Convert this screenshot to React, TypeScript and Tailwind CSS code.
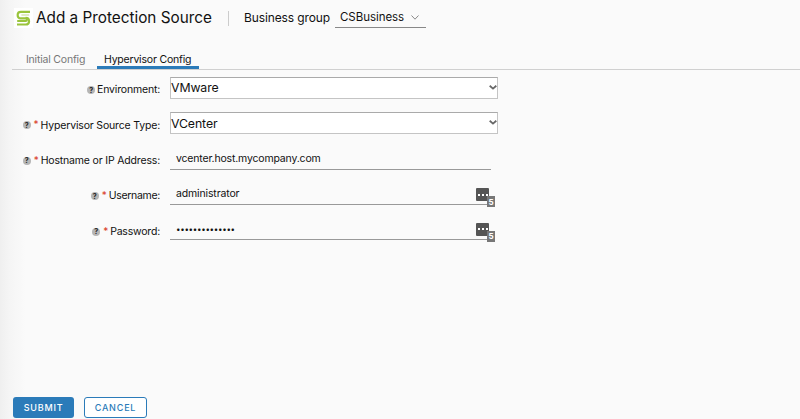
import type { ReactNode } from "react";

function Logo() {
  return (
    <div className="flex h-5 w-[19px] items-center justify-center bg-white">
      <svg width="15" height="16" viewBox="0 0 15 16" fill="none" stroke="#9ac43c" strokeWidth="2.2">
        <path d="M14 1.8H4.8C.6 1.8.6 8.4 4.8 8.4h5c1.4 0 1.4 2.6 0 2.6H1.2" />
        <path d="M13.2 5H5.4" strokeWidth="1.2" strokeOpacity=".5" />
        <path d="M9.6 7.8c4.6 0 4.6 6.7 0 6.7H1" />
      </svg>
    </div>
  );
}

function Help() {
  return (
    <span className="flex size-[8px] items-center justify-center rounded-full bg-[#b5b5b5] text-[7px] leading-none font-bold text-[#222]">
      ?
    </span>
  );
}

function Row({ label, required, spacing, children }: { label: string; required?: boolean; spacing: string; children: ReactNode }) {
  return (
    <div className="flex h-[35.4px] items-start">
      <div className="mt-[6px] flex h-4 w-[160px] shrink-0 items-center justify-end">
        <Help />
        {required && <span className="ml-[3px] h-4 w-[5px] text-[10px] leading-[15px] text-[#d8391f]">*</span>}
        <span className={`ml-[2px] text-[10.5px] whitespace-nowrap ${spacing}`}>{label}</span>
      </div>
      <div className="ml-[10px]">{children}</div>
    </div>
  );
}

function Select({ value }: { value: string }) {
  return (
    <div className="mt-px flex h-[22px] w-[328px] items-center justify-between border border-[#c4c4c4] border-t-[#aaa] bg-white text-[12.3px]">
      <span className="mt-px tracking-[-0.1px]">{value}</span>
      <svg className="mb-px" width="8" height="5" viewBox="0 0 8 5" fill="none" stroke="#666" strokeWidth="1.8">
        <path d="M.7.8 4 3.6 7.3.8" />
      </svg>
    </div>
  );
}

function Field({ value, manager, spacing }: { value: string; manager?: boolean; spacing: string }) {
  return (
    <div className="relative mt-px h-[23px] w-[321px] border-b border-[#999] pl-[6px] text-[10.5px] leading-[24px]">
      <span className={`block ${spacing}`}>{value}</span>
      {manager && (
        <div className="absolute top-[6px] right-[2px] flex h-[13px] w-[13px] items-center justify-center gap-[2px] rounded-[1px] bg-[#555]">
          <i className="size-[2px] bg-white" />
          <i className="size-[2px] bg-white" />
          <i className="size-[2px] bg-white" />
          <b className="absolute top-[8px] left-[11px] flex h-[11px] w-[8px] items-center justify-center bg-[#777] text-[8px] leading-none text-white">5</b>
        </div>
      )}
    </div>
  );
}

export default function App() {
  return (
    <div className="flex h-[419px] w-[800px] flex-col overflow-hidden bg-[#fafafa] bg-[linear-gradient(90deg,#efefef_0,#f5f5f5_10px,#fafafa_26px)] font-['Inter',sans-serif] text-[#111]">
      <header className="flex h-[36px] items-center pl-[14px]">
        <Logo />
        <h1 className="ml-[3px] w-[176px] text-[15.3px] whitespace-nowrap">Add a Protection Source</h1>
        <div className="ml-[16px] h-[15px] w-px bg-[#ccc]" />
        <span className="ml-[15px] w-[91px] text-[12px] tracking-[-0.12px] whitespace-nowrap">Business group</span>
        <div className="mt-px flex h-[19px] w-[91px] items-center border-b border-[#888] pl-[5px] text-[11.5px]">
          <span className="w-[71px] tracking-[-0.05px]">CSBusiness</span>
          <svg className="mb-[2px]" width="8" height="5" viewBox="0 0 8 5" fill="none" stroke="#888"><path d="m.5.5 3.5 3.7L7.5.5" /></svg>
        </div>
      </header>
      <nav className="mt-[14px] ml-3 flex h-5 shrink-0 border-b border-[#d0d0d0] text-[10.5px] leading-[20px] whitespace-nowrap">
        <span className="ml-[14px] w-[71px] tracking-[-0.2px] text-[#777]">Initial Config</span>
        <span className="h-[19px] w-[102px] border-b-[3px] border-[#2b7bb9] pl-[7px] tracking-[-0.2px]">Hypervisor Config</span>
      </nav>
      <main className="flex-1 pt-[6px]">
        <Row label="Environment:" spacing="tracking-[-0.18px]"><Select value="VMware" /></Row>
        <Row label="Hypervisor Source Type:" required spacing="tracking-[-0.17px]"><Select value="VCenter" /></Row>
        <Row label="Hostname or IP Address:" required spacing="tracking-[-0.17px]"><Field value="vcenter.host.mycompany.com" spacing="-mt-px tracking-[-0.17px]" /></Row>
        <Row label="Username:" required spacing="tracking-[-0.3px]"><Field value="administrator" manager spacing="-mt-px tracking-[-0.14px]" /></Row>
        <Row label="Password:" required spacing="tracking-[-0.2px]"><Field value="••••••••••••••" manager spacing="-mt-[2px] text-[8px] tracking-[-0.3px]" /></Row>
      </main>
      <footer className="flex h-[22px] shrink-0 gap-[10px] pl-[13px] text-[9px] font-medium tracking-[0.8px]">
        <button className="h-[21px] w-[61px] rounded-[3px] bg-[#2b7bb9] text-white">SUBMIT</button>
        <button className="h-[21px] w-[63px] rounded-[3px] border border-[#2b7bb9] bg-white text-[#2b7bb9]">CANCEL</button>
      </footer>
    </div>
  );
}
